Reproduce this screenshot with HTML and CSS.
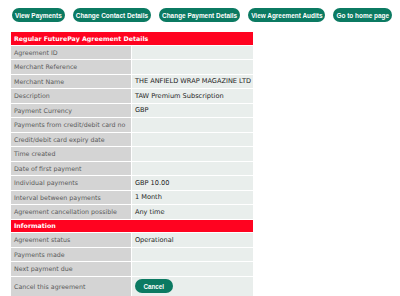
FILE: index.html
```html
<!DOCTYPE html>
<html>
<head>
<meta charset="utf-8">
<link rel="stylesheet" href="styles.css">
</head>
<body>
<div class="toolbar">
  <a class="btn">View Payments</a>
  <a class="btn">Change Contact Details</a>
  <a class="btn">Change Payment Details</a>
  <a class="btn">View Agreement Audits</a>
  <a class="btn">Go to home page</a>
</div>
<table class="details">
  <tr class="head"><td colspan="2">Regular FuturePay Agreement Details</td></tr>
  <tr><td class="lbl">Agreement ID</td><td class="val"></td></tr>
  <tr><td class="lbl">Merchant Reference</td><td class="val"></td></tr>
  <tr><td class="lbl">Merchant Name</td><td class="val">THE ANFIELD WRAP MAGAZINE LTD</td></tr>
  <tr><td class="lbl">Description</td><td class="val">TAW Premium Subscription</td></tr>
  <tr><td class="lbl">Payment Currency</td><td class="val">GBP</td></tr>
  <tr><td class="lbl">Payments from credit/debit card no</td><td class="val"></td></tr>
  <tr><td class="lbl">Credit/debit card expiry date</td><td class="val"></td></tr>
  <tr><td class="lbl">Time created</td><td class="val"></td></tr>
  <tr><td class="lbl">Date of first payment</td><td class="val"></td></tr>
  <tr><td class="lbl">Individual payments</td><td class="val">GBP 10.00</td></tr>
  <tr><td class="lbl">Interval between payments</td><td class="val">1 Month</td></tr>
  <tr><td class="lbl">Agreement cancellation possible</td><td class="val">Any time</td></tr>
  <tr class="head"><td colspan="2">Information</td></tr>
  <tr><td class="lbl">Agreement status</td><td class="val">Operational</td></tr>
  <tr><td class="lbl">Payments made</td><td class="val"></td></tr>
  <tr><td class="lbl">Next payment due</td><td class="val"></td></tr>
  <tr class="tall"><td class="lbl">Cancel this agreement</td><td class="val"><a class="btn btn-cancel">Cancel</a></td></tr>
</table>
</body>
</html>
```
FILE: styles.css
```css
html, body {
  margin: 0;
  padding: 0;
  background: #ffffff;
}
body {
  font-family: "DejaVu Sans", Verdana, sans-serif;
}
.toolbar {
  display: flex;
  gap: 8px;
  padding: 8px 0 0 12px;
  height: 14px;
}
.btn {
  display: inline-flex;
  align-items: center;
  justify-content: center;
  height: 14px;
  padding: 0 3px;
  border-radius: 7px;
  background: #0b7a62;
  color: #ffffff;
  font-family: "Liberation Sans", Arial, sans-serif;
  font-weight: bold;
  font-size: 6.45px;
  white-space: nowrap;
  text-decoration: none;
}
.details {
  margin: 9px 0 0 10px;
  border-collapse: separate;
  border-spacing: 1px;
  width: 244px;
  font-size: 6.3px;
}
.details td {
  height: 13.5px;
  padding: 0 2px 0 3px;
  box-sizing: border-box;
  white-space: nowrap;
}
.head td {
  background: #ff0320;
  color: #ffffff;
  font-weight: bold;
  height: 12.5px;
}
.lbl {
  width: 120px;
  background: #d4d4d4;
  color: #5a5a5a;
}
.val {
  background: #e9eeec;
  color: #1e1e1e;
  font-size: 6.6px;
}
.tall td {
  height: 19px;
}
.btn-cancel {
  padding: 0 8.5px;
  height: 14px;
  font-size: 6.3px;
}
```
